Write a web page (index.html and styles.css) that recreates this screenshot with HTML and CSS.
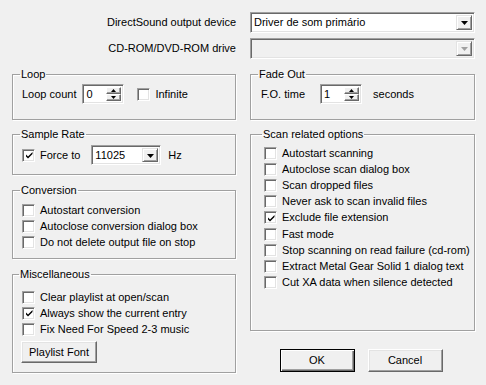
FILE: index.html
```html
<!DOCTYPE html>
<html>
<head>
<meta charset="utf-8">
<link rel="stylesheet" href="styles.css">
</head>
<body>
<div class="dlg">
  <div class="top">
    <span class="lbl">DirectSound output device</span>
    <div class="combo wide"><span class="val">Driver de som primário</span><span class="drop"><svg width="7" height="4" viewBox="0 0 7 4"><path d="M0 0h7L3.5 4z" fill="#000"/></svg></span></div>
    <span class="lbl">CD-ROM/DVD-ROM drive</span>
    <div class="combo wide disabled"><span class="val"></span><span class="drop"><svg width="7" height="4" viewBox="0 0 7 4"><path d="M0 0h7L3.5 4z" fill="#a0a0a0"/></svg></span></div>
  </div>

  <div class="cols">
    <div class="col">
      <fieldset class="grp g-loop">
        <legend>Loop</legend>
        <div class="row">
          <span class="t">Loop count</span>
          <div class="spin"><span class="val">0</span><span class="arrows"><span class="ab"><svg width="5" height="3" viewBox="0 0 5 3"><path d="M0 3h5L2.5 0z" fill="#000"/></svg></span><span class="ab"><svg width="5" height="3" viewBox="0 0 5 3"><path d="M0 0h5L2.5 3z" fill="#000"/></svg></span></span></div>
          <span class="chk"><span class="box"></span>Infinite</span>
        </div>
      </fieldset>

      <fieldset class="grp g-rate">
        <legend>Sample Rate</legend>
        <div class="row">
          <span class="chk"><span class="box on"><svg width="9" height="9" viewBox="0 0 9 9"><path d="M1 3.5l2 2 4.5-4.5v2L3 7.5l-2-2z" fill="#000"/></svg></span>Force to</span>
          <div class="combo small"><span class="val">11025</span><span class="drop"><svg width="7" height="4" viewBox="0 0 7 4"><path d="M0 0h7L3.5 4z" fill="#000"/></svg></span></div>
          <span class="t">Hz</span>
        </div>
      </fieldset>

      <fieldset class="grp g-conv">
        <legend>Conversion</legend>
        <div class="list">
          <span class="chk"><span class="box"></span>Autostart conversion</span>
          <span class="chk"><span class="box"></span>Autoclose conversion dialog box</span>
          <span class="chk"><span class="box"></span>Do not delete output file on stop</span>
        </div>
      </fieldset>

      <fieldset class="grp g-misc">
        <legend>Miscellaneous</legend>
        <div class="list">
          <span class="chk"><span class="box"></span>Clear playlist at open/scan</span>
          <span class="chk"><span class="box on"><svg width="9" height="9" viewBox="0 0 9 9"><path d="M1 3.5l2 2 4.5-4.5v2L3 7.5l-2-2z" fill="#000"/></svg></span>Always show the current entry</span>
          <span class="chk"><span class="box"></span>Fix Need For Speed 2-3 music</span>
        </div>
        <button class="btn pf">Playlist Font</button>
      </fieldset>
    </div>

    <div class="col">
      <fieldset class="grp g-fade">
        <legend>Fade Out</legend>
        <div class="row">
          <span class="t">F.O. time</span>
          <div class="spin"><span class="val">1</span><span class="arrows"><span class="ab"><svg width="5" height="3" viewBox="0 0 5 3"><path d="M0 3h5L2.5 0z" fill="#000"/></svg></span><span class="ab"><svg width="5" height="3" viewBox="0 0 5 3"><path d="M0 0h5L2.5 3z" fill="#000"/></svg></span></span></div>
          <span class="t">seconds</span>
        </div>
      </fieldset>

      <fieldset class="grp g-scan">
        <legend>Scan related options</legend>
        <div class="list">
          <span class="chk"><span class="box"></span>Autostart scanning</span>
          <span class="chk"><span class="box"></span>Autoclose scan dialog box</span>
          <span class="chk"><span class="box"></span>Scan dropped files</span>
          <span class="chk"><span class="box"></span>Never ask to scan invalid files</span>
          <span class="chk"><span class="box on"><svg width="9" height="9" viewBox="0 0 9 9"><path d="M1 3.5l2 2 4.5-4.5v2L3 7.5l-2-2z" fill="#000"/></svg></span>Exclude file extension</span>
          <span class="chk"><span class="box"></span>Fast mode</span>
          <span class="chk"><span class="box"></span>Stop scanning on read failure (cd-rom)</span>
          <span class="chk"><span class="box"></span>Extract Metal Gear Solid 1 dialog text</span>
          <span class="chk"><span class="box"></span>Cut XA data when silence detected</span>
        </div>
      </fieldset>

      <div class="actions">
        <button class="btn def">OK</button>
        <button class="btn">Cancel</button>
      </div>
    </div>
  </div>
</div>
</body>
</html>
```
FILE: styles.css
```css
html, body {
  margin: 0;
  padding: 0;
  background: #f0f0f0;
}
body {
  font-family: "Liberation Sans", Arial, sans-serif;
  font-size: 11px;
  line-height: 13px;
  color: #000;
}
.dlg {
  width: 486px;
  height: 385px;
  box-sizing: border-box;
  padding: 12px 11px 0 12px;
}
.top {
  display: grid;
  grid-template-columns: 225px 225px;
  column-gap: 13px;
  row-gap: 5px;
  align-items: center;
}
.lbl {
  text-align: right;
  padding-right: 1px;
}
.combo, .spin {
  box-sizing: border-box;
  display: flex;
  align-items: stretch;
  background: #fff;
  border-style: solid;
  border-width: 1px;
  border-color: #a0a0a0 #fff #fff #a0a0a0;
  box-shadow: inset 1px 1px 0 #696969, inset -1px -1px 0 #e3e3e3;
  padding: 2px;
}
.combo .val, .spin .val {
  flex: 1;
  line-height: 14px;
  padding-left: 1px;
  white-space: nowrap;
  overflow: hidden;
}
.combo.wide { height: 21px; }
.combo.disabled { background: #f0f0f0; }
.drop {
  width: 16px;
  box-sizing: border-box;
  display: flex;
  align-items: center;
  justify-content: center;
  background: #f0f0f0;
  border-style: solid;
  border-width: 1px;
  border-color: #e3e3e3 #696969 #696969 #e3e3e3;
  box-shadow: inset 1px 1px 0 #fff, inset -1px -1px 0 #a0a0a0;
  padding-top: 1px;
}
.combo.small {
  width: 70px;
  height: 20px;
  margin-left: 11px;
}
.spin {
  width: 42px;
  height: 20px;
}
.arrows {
  width: 15px;
  display: flex;
  flex-direction: column;
}
.ab {
  flex: 1;
  box-sizing: border-box;
  display: flex;
  align-items: center;
  justify-content: center;
  background: #f0f0f0;
  border-style: solid;
  border-width: 1px;
  border-color: #fff #696969 #696969 #fff;
  box-shadow: inset -1px -1px 0 #a0a0a0;
}
.cols {
  display: grid;
  grid-template-columns: 224px 225px;
  column-gap: 14px;
  margin-top: 9px;
  align-items: start;
}
.col {
  display: flex;
  flex-direction: column;
}
.grp {
  margin: 0;
  border: 1px solid #a0a0a0;
  box-shadow: inset 1px 1px 0 #fff, 1px 1px 0 #fff;
  padding: 0 8px 0 9px;
  min-width: 0;
}
.grp legend {
  padding: 0 1px;
  margin-left: -2px;
  line-height: 13px;
}
.row {
  display: flex;
  align-items: center;
}
.t { white-space: nowrap; }
.chk {
  display: flex;
  align-items: center;
  white-space: nowrap;
  height: 16px;
}
.box {
  box-sizing: border-box;
  width: 13px;
  height: 13px;
  margin-right: 5px;
  background: #fff;
  border-style: solid;
  border-width: 1px;
  border-color: #a0a0a0 #fff #fff #a0a0a0;
  box-shadow: inset 1px 1px 0 #696969, inset -1px -1px 0 #e3e3e3;
  display: flex;
  align-items: center;
  justify-content: center;
  flex: none;
}
.box svg { margin: 1px 0 0 1px; }
.list {
  display: flex;
  flex-direction: column;
}
.g-scan .chk { height: 16.2px; }
.g-loop { padding-top: 3px; padding-bottom: 15px; }
.g-loop .spin { margin-left: 6px; }
.g-loop .chk { margin-left: 13px; }
.g-fade { padding-top: 3px; padding-bottom: 15px; }
.g-fade .t:first-child { margin-left: 1px; }
.g-fade .spin { margin-left: 15px; }
.g-fade .t:last-child { margin-left: 11px; }
.g-rate { margin-top: 8px; padding-top: 4px; padding-bottom: 9px; }
.g-conv { margin-top: 9px; padding-top: 5px; padding-bottom: 8px; }
.g-rate .t { margin-left: 7px; }
.g-misc { margin-top: 9px; padding-top: 8px; padding-bottom: 9px; padding-left: 8px; }
.g-misc .list { padding-left: 1px; }
.g-scan { margin-top: 8px; padding-top: 4px; padding-bottom: 39px; padding-left: 13px; }
.btn {
  font: inherit;
  color: #000;
  background: #f0f0f0;
  box-sizing: border-box;
  height: 23px;
  padding: 0;
  border-style: solid;
  border-width: 1px;
  border-color: #fff #696969 #696969 #fff;
  box-shadow: inset -1px -1px 0 #a0a0a0, inset 1px 1px 0 #e3e3e3;
}
.pf {
  width: 76px;
  height: 22px;
  margin-top: 4px;
}
.actions {
  display: flex;
  justify-content: center;
  gap: 13px;
  margin-top: 18px;
  padding-right: 3px;
}
.actions .btn { width: 75px; }
.btn.def {
  border: 1px solid #000;
  box-shadow: inset 1px 1px 0 #fff, inset -1px -1px 0 #696969, inset -2px -2px 0 #a0a0a0;
}
```
